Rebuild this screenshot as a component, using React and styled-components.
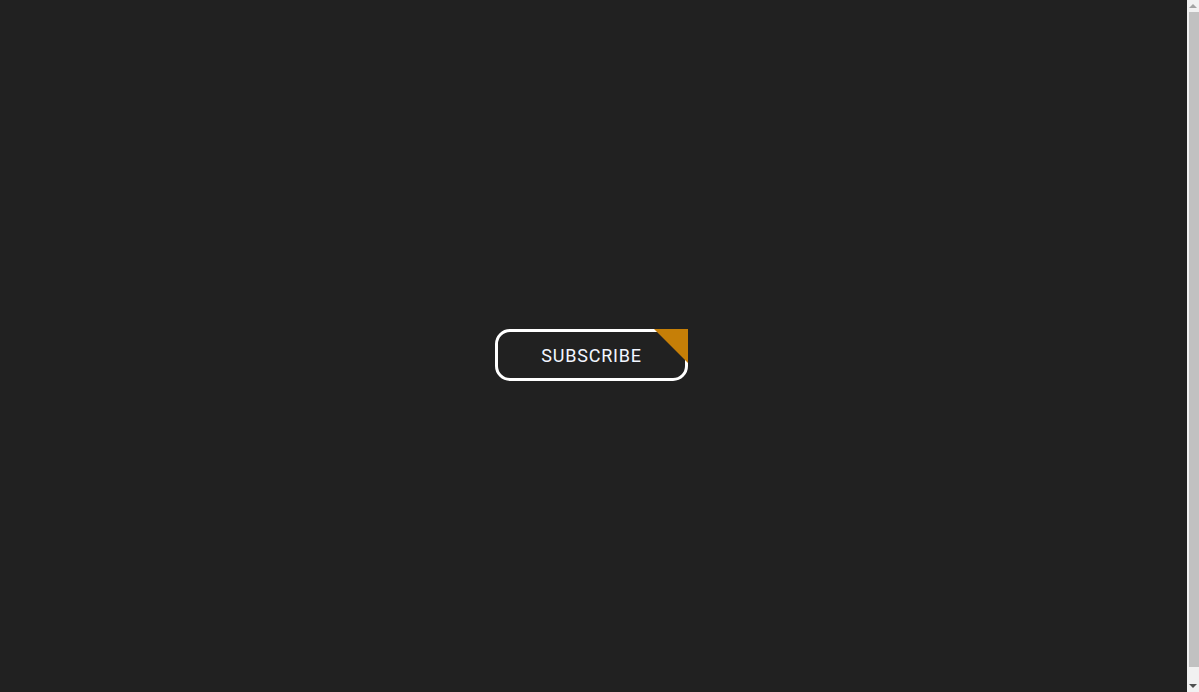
import React from 'react'
import styled, { createGlobalStyle } from 'styled-components'

const GlobalStyle = createGlobalStyle`
    html {
        background: #212121;
    }
    body {
        margin: 8px 24px 8px 8px;
        padding-top: 1px;
        height: 100vh;
        background: #212121;
        font-family: Roboto, 'Liberation Sans', sans-serif;
        display: flex;
        align-items: center;
        justify-content: center;
    }
`

export default function App() {
    return (
        <>
            <GlobalStyle />
            <Button>Subscribe</Button>
            <Scrollbar aria-hidden='true'>
                <Arrow />
                <Thumb />
                <Arrow $down />
            </Scrollbar>
        </>
    )
}

const Button = styled.button`
    position: relative;
    box-sizing: border-box;
    width: 193px;
    height: 52px;
    padding: 0;
    border: 3px solid #ffffff;
    border-radius: 15px;
    background: transparent;
    color: #f2f6ff;
    font-family: Roboto, 'Liberation Sans', sans-serif;
    font-size: 18px;
    letter-spacing: 0.8px;
    text-transform: uppercase;
    cursor: pointer;
    &::after{
        content: '';
        position: absolute;
        top: -3px;
        right: -3px;
        width: 0;
        height: 0;
        border-style: solid;
        border-width: 0 34px 34px 0;
        border-color: transparent #c67f07 transparent transparent;
    }
`

//fake classic scrollbar, the page is a little taller than the window
const Scrollbar = styled.div`
    position: fixed;
    top: 0;
    right: 0;
    width: 12px;
    height: 100vh;
    background: #f1f1f1;
    display: flex;
    flex-direction: column;
    align-items: center;
`

const Arrow = styled.div`
    flex: 0 0 12px;
    width: 12px;
    display: flex;
    align-items: center;
    justify-content: center;
    &::before{
        content: '';
        width: 0;
        height: 0;
        border-left: 4px solid transparent;
        border-right: 4px solid transparent;
        ${p => p.$down
            ? 'border-top: 4px solid #505050;'
            : 'border-bottom: 4px solid #a3a3a3;'}
    }
`

const Thumb = styled.div`
    flex: 1;
    align-self: flex-end;
    width: 10px;
    margin-bottom: 13px;
    background: #c1c1c1;
`
